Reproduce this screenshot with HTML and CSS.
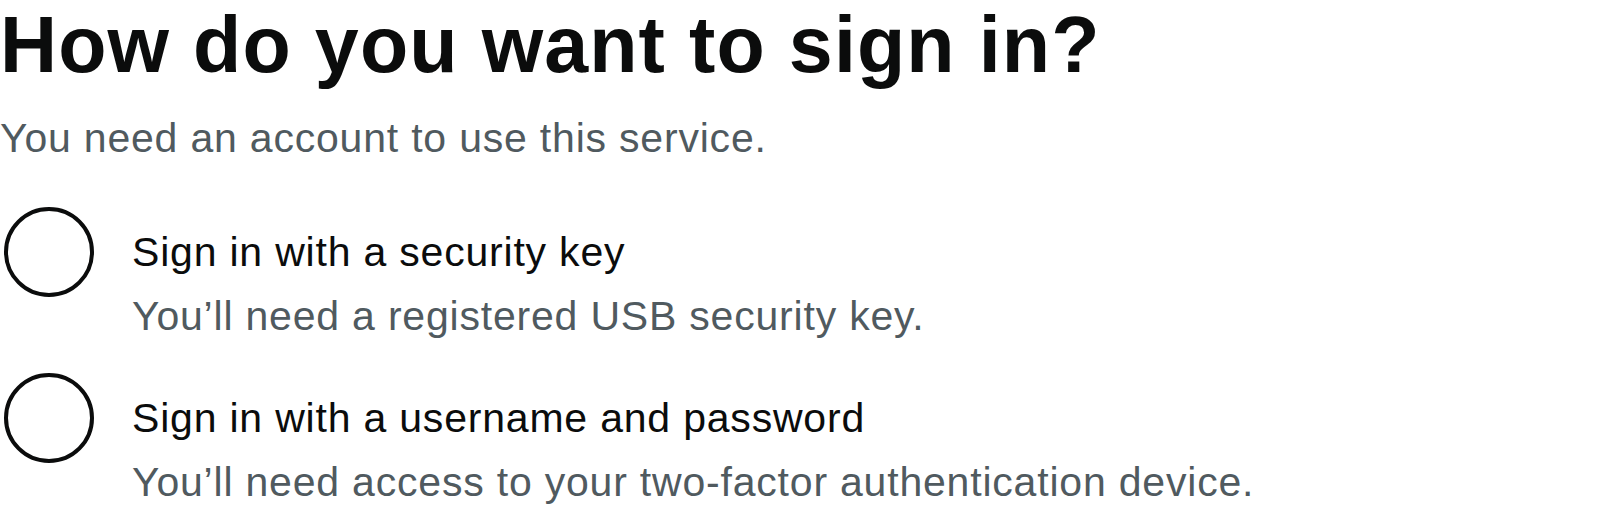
FILE: index.html
```html
<!DOCTYPE html>
<html lang="en">
<head>
<meta charset="utf-8">
<title>How do you want to sign in?</title>
<link rel="stylesheet" href="styles.css">
</head>
<body>
<main class="page">
  <h1 class="heading">How do you want to sign in?</h1>
  <p class="lead">You need an account to use this service.</p>
  <div class="radios">
    <label class="radio">
      <input class="radio-input" type="radio" name="signin" value="key">
      <span class="radio-circle"></span>
      <span class="radio-text">
        <span class="radio-label">Sign in with a security key</span>
        <span class="radio-hint">You’ll need a registered USB security key.</span>
      </span>
    </label>
    <label class="radio">
      <input class="radio-input" type="radio" name="signin" value="password">
      <span class="radio-circle"></span>
      <span class="radio-text">
        <span class="radio-label">Sign in with a username and password</span>
        <span class="radio-hint">You’ll need access to your two-factor authentication device.</span>
      </span>
    </label>
  </div>
</main>
</body>
</html>
```

FILE: styles.css
```css
html, body {
  margin: 0;
  padding: 0;
  background: #ffffff;
}

body {
  font-family: "Liberation Sans", Arial, sans-serif;
  color: #0b0c0c;
}

.page {
  display: flex;
  flex-direction: column;
}

.heading {
  margin: 0;
  font-size: 79px;
  line-height: 90px;
  font-weight: 700;
  letter-spacing: 1.1px;
  color: #0b0c0c;
}

.lead {
  margin: 23px 0 0;
  font-size: 41px;
  line-height: 50px;
  letter-spacing: 0.8px;
  color: #505a5f;
}

.radios {
  display: flex;
  flex-direction: column;
  gap: 32px;
  margin-top: 44px;
}

.radio {
  display: flex;
  align-items: flex-start;
  cursor: pointer;
}

.radio-input {
  position: absolute;
  opacity: 0;
  width: 0;
  height: 0;
  margin: 0;
}

.radio-circle {
  flex: none;
  box-sizing: border-box;
  width: 90px;
  height: 90px;
  margin-left: 4px;
  border: 4px solid #0b0c0c;
  border-radius: 50%;
  background: #ffffff;
}

.radio-text {
  display: flex;
  flex-direction: column;
  gap: 14px;
  padding-top: 20px;
  margin-left: 38px;
}

.radio-label {
  font-size: 41px;
  line-height: 50px;
  letter-spacing: 0.8px;
  color: #0b0c0c;
}

.radio-hint {
  font-size: 41px;
  line-height: 50px;
  letter-spacing: 0.8px;
  color: #505a5f;
}
```
